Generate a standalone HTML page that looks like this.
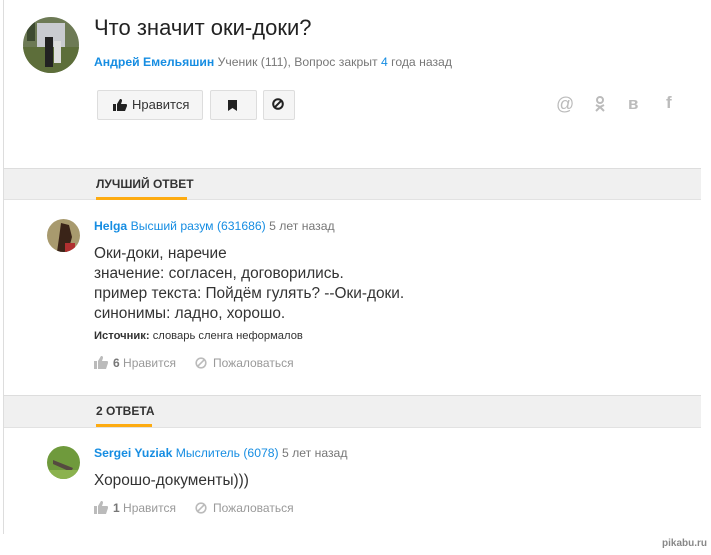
<!DOCTYPE html>
<html><head><meta charset="utf-8"><style>
body{margin:0;width:711px;height:555px;background:#fff;font-family:"Liberation Sans",Arial,sans-serif;position:relative;overflow:hidden;color:#333}
.a{position:absolute;white-space:nowrap}
.lb{position:absolute;left:3px;top:0;width:1px;height:534px;background:#ddd}
.blue{color:#168de2}
.gray{color:#777}
.btn{position:absolute;top:90px;height:28px;border:1px solid #ddd;border-radius:2px;background:#f5f5f5}
.bar{position:absolute;left:4px;width:697px;background:#f0f0f0;border-top:1px solid #ddd;border-bottom:1px solid #e2e2e2}
.lab{position:absolute;font-size:12px;font-weight:bold;color:#333}
.ul{position:absolute;height:3px;background:#fdab11}
.body{font-size:15.4px;line-height:20px;color:#333}
.lk{font-size:12px;color:#999}
</style></head><body>
<div class="lb"></div>
<svg class="a" style="left:23px;top:17px" width="56" height="56"><defs><clipPath id="c1"><circle cx="28" cy="28" r="28"/></clipPath></defs><g clip-path="url(#c1)"><rect width="56" height="56" fill="#6d7a55"/><rect x="0" y="30" width="56" height="26" fill="#5d6e3a"/><rect x="14" y="6" width="28" height="24" fill="#c9cbd0"/><rect x="22" y="20" width="8" height="30" fill="#222"/><rect x="31" y="24" width="7" height="22" fill="#ddd"/><rect x="4" y="4" width="8" height="20" fill="#3d4a30"/></g></svg>
<div class="a" style="left:94px;top:15px;font-size:22px;color:#222">Что значит оки-доки?</div>
<div class="a" style="left:94px;top:55px;font-size:12.2px"><b class="blue">Андрей Емельяшин</b> <span class="gray">Ученик (111), Вопрос закрыт <span class="blue">4</span> года назад</span></div>
<div class="btn" style="left:97px;width:104px"></div>
<svg class="a" style="left:113px;top:99px" width="14" height="12"><path d="M0 5h3v7H0zM4 5l3-5c2 0 2 1 2 2l-1 3h5c1 0 1 1 1 2l-2 5H4z" fill="#222"/></svg>
<div class="a" style="left:132px;top:97px;font-size:13px;color:#333">Нравится</div>
<div class="btn" style="left:210px;width:45px"></div>
<svg class="a" style="left:228px;top:100px" width="9" height="11"><path d="M0 0h9v11L4.5 8 0 11z" fill="#222"/></svg>
<div class="btn" style="left:263px;width:30px"></div>
<svg class="a" style="left:272px;top:98px" width="12" height="12"><circle cx="6" cy="6" r="4.8" fill="none" stroke="#222" stroke-width="2"/><path d="M9.3 2.7L2.7 9.3" stroke="#222" stroke-width="2"/></svg>
<div class="a" style="left:556px;top:94px;font-size:18px;color:#bbb">@</div>
<svg class="a" style="left:595px;top:96px" width="10" height="16"><circle cx="5" cy="4" r="3" fill="none" stroke="#bbb" stroke-width="2"/><path d="M1 9l4 2 4-2M5 11l-4 4M5 11l4 4" stroke="#bbb" stroke-width="2" fill="none"/></svg>
<div class="a" style="left:628px;top:94px;font-size:17px;font-weight:bold;color:#bbb">в</div>
<div class="a" style="left:666px;top:93px;font-size:17px;font-weight:bold;color:#bbb">f</div>
<div class="bar" style="top:168px;height:30px"></div>
<div class="lab" style="left:96px;top:177px">ЛУЧШИЙ ОТВЕТ</div>
<div class="ul" style="left:96px;top:197px;width:91px"></div>
<svg class="a" style="left:47px;top:219px" width="33" height="33"><defs><clipPath id="c2"><circle cx="16.5" cy="16.5" r="16.5"/></clipPath></defs><g clip-path="url(#c2)"><rect width="33" height="33" fill="#a89a6e"/><path d="M14 4l8 2 3 12-4 15H10l2-14z" fill="#3a2418"/><rect x="18" y="24" width="10" height="9" fill="#b03030"/></g></svg>
<div class="a" style="left:94px;top:219px;font-size:12.2px"><b class="blue">Helga</b> <span class="blue">Высший разум (631686)</span> <span class="gray">5 лет назад</span></div>
<div class="a body" style="left:94px;top:244px">Оки-доки, наречие<br>значение: согласен, договорились.<br>пример текста: Пойдём гулять? --Оки-доки.<br>синонимы: ладно, хорошо.</div>
<div class="a" style="left:94px;top:330px;font-size:11.2px;color:#333"><b>Источник:</b> словарь сленга неформалов</div>
<svg class="a" style="left:94px;top:356px" width="14" height="13"><path d="M0 5h3v8H0zM4 5l3-5c2 0 2 1 2 2l-1 3h5c1 0 1 1 1 2l-2 6H4z" fill="#bbb"/></svg>
<div class="a lk" style="left:113px;top:356px"><b style="color:#777">6</b> Нравится</div>
<svg class="a" style="left:195px;top:357px" width="12" height="12"><circle cx="6" cy="6" r="4.8" fill="none" stroke="#bbb" stroke-width="1.6"/><path d="M9.3 2.7L2.7 9.3" stroke="#bbb" stroke-width="1.6"/></svg>
<div class="a lk" style="left:213px;top:356px">Пожаловаться</div>
<div class="bar" style="top:395px;height:31px"></div>
<div class="lab" style="left:96px;top:404px">2 ОТВЕТА</div>
<div class="ul" style="left:96px;top:424px;width:56px"></div>
<svg class="a" style="left:47px;top:446px" width="33" height="33"><defs><clipPath id="c3"><circle cx="16.5" cy="16.5" r="16.5"/></clipPath></defs><g clip-path="url(#c3)"><rect width="33" height="33" fill="#6f9a3c"/><path d="M6 14l20 8-2 4L6 18z" fill="#554a40"/><rect x="0" y="24" width="33" height="9" fill="#8bb24e"/></g></svg>
<div class="a" style="left:94px;top:446px;font-size:12.2px"><b class="blue">Sergei Yuziak</b> <span class="blue">Мыслитель (6078)</span> <span class="gray">5 лет назад</span></div>
<div class="a body" style="left:94px;top:471px">Хорошо-документы)))</div>
<svg class="a" style="left:94px;top:501px" width="14" height="13"><path d="M0 5h3v8H0zM4 5l3-5c2 0 2 1 2 2l-1 3h5c1 0 1 1 1 2l-2 6H4z" fill="#bbb"/></svg>
<div class="a lk" style="left:113px;top:501px"><b style="color:#777">1</b> Нравится</div>
<svg class="a" style="left:195px;top:502px" width="12" height="12"><circle cx="6" cy="6" r="4.8" fill="none" stroke="#bbb" stroke-width="1.6"/><path d="M9.3 2.7L2.7 9.3" stroke="#bbb" stroke-width="1.6"/></svg>
<div class="a lk" style="left:213px;top:501px">Пожаловаться</div>
<div class="a" style="left:662px;top:538px;font-size:10px;color:#888;font-weight:bold">pikabu.ru</div>
</body></html>
